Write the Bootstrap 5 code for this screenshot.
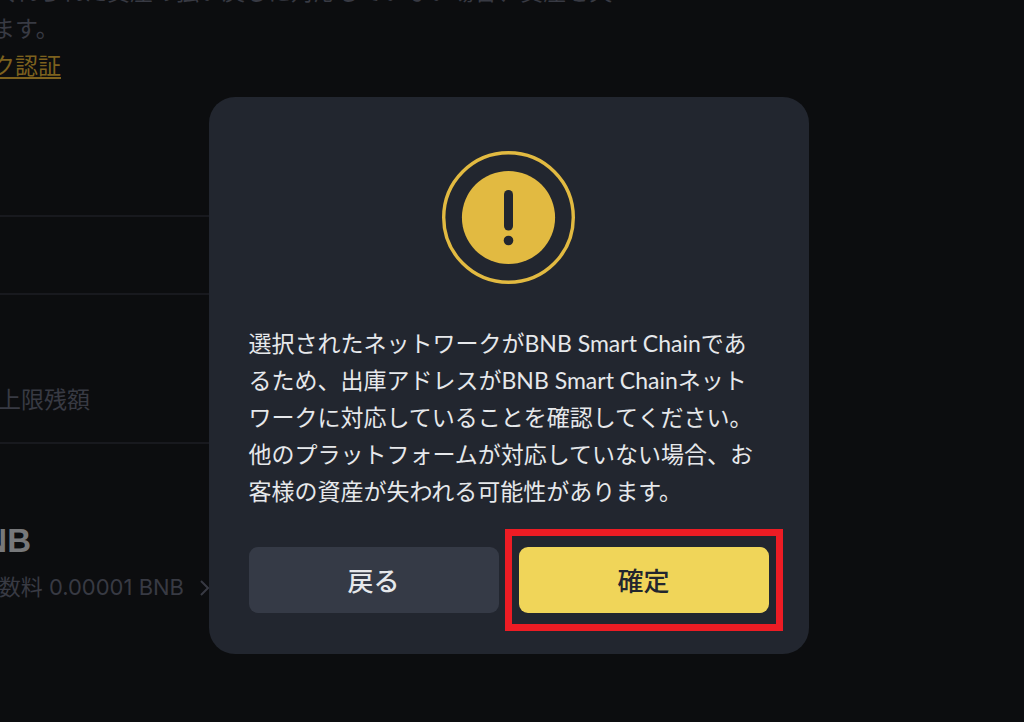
<!DOCTYPE html>
<html lang="ja">
<head>
<meta charset="utf-8">
<meta name="viewport" content="width=device-width, initial-scale=1">
<title>出庫ネットワークの確認</title>
<link href="https://cdn.jsdelivr.net/npm/bootstrap@5.3.0/dist/css/bootstrap.min.css" rel="stylesheet">
<style>
  body { background: #0c0d0f; color: #383a43; font: 23px/37px Lato, "Noto Sans CJK JP", sans-serif; }
  .backdrop-page { min-height: 100vh; }
  .notice { margin: -27px 0 131px -8px; }
  .notice a { color: #7d611e; text-decoration-thickness: 2px; text-underline-offset: 3px; }
  .rule { width: 210px; border-top: 2px solid #18191e; }
  .rule-gap { height: 76px; }
  .label-col { width: 90px; margin: 86px 0 24px; }
  .coin-col { width: 31px; margin-top: 77px; font: bold 33px/40px "Liberation Sans", sans-serif; color: #77787a; }
  .fee-col { width: 210px; font-family: Inter, "Noto Sans CJK JP", sans-serif; font-size: 22px; }
  .overlay { padding: 97px 7px 24px 0; }
  .confirm-box { width: 600px; max-width: 100%; padding: 54px 40px 41px; border-radius: 26px; background: #22262f; color: #e6e8eb; }
  .message { margin: 41px 0 37px; }
  .actions { gap: 20px; }
  .action { height: 66px; padding-top: 8px; border: 0; border-radius: 9px; font-size: 26px; font-weight: 500; }
  .action-back, .action-back:hover { background: #353a46; color: #e6e8eb; }
  .action-ok, .action-ok:hover { background: #f0d559; color: #22262f; }
  .highlight { inset: -18px -14px; border: 7px solid #ed1c24; }
</style>
</head>
<body>
<main class="backdrop-page overflow-hidden text-nowrap">
  <div class="notice">
    <p class="mb-0">入れられた資産の払い戻しに対応していない場合、資産を失</p>
    <p class="mb-0">ます。</p>
    <a href="#">ク認証</a>
  </div>
  <div class="rule"></div>
  <div class="rule-gap"></div>
  <div class="rule"></div>
  <div class="label-col d-flex justify-content-end">上限残額</div>
  <div class="rule"></div>
  <div class="coin-col d-flex justify-content-end">BNB</div>
  <div class="fee-col d-flex justify-content-end align-items-center mt-2">
    <span>手数料 0.00001 BNB</span>
    <svg class="ms-3 flex-shrink-0" width="10" height="16" viewBox="0 0 10 16" fill="none" stroke="currentColor" stroke-width="2" aria-hidden="true"><path d="M1 1l7 7-7 7"/></svg>
  </div>
</main>

<div class="overlay position-absolute top-0 start-0 w-100 d-flex justify-content-center">
  <section class="confirm-box" role="dialog" aria-modal="true" aria-labelledby="message">
    <svg class="d-block mx-auto" width="133" height="133" viewBox="0 0 133 133" aria-hidden="true">
      <circle cx="66.5" cy="66.5" r="64.8" fill="none" stroke="#e2ba41" stroke-width="3.4"/>
      <circle cx="66.5" cy="66.5" r="46.6" fill="#e2ba41"/>
      <rect x="62" y="39" width="9" height="40.5" rx="4.5" fill="#22262f"/>
      <circle cx="66.5" cy="89.5" r="4.8" fill="#22262f"/>
    </svg>
    <p class="message text-nowrap" id="message">選択されたネットワークがBNB Smart Chainであ<br>るため、出庫アドレスがBNB Smart Chainネット<br>ワークに対応していることを確認してください。<br>他のプラットフォームが対応していない場合、お<br>客様の資産が失われる可能性があります。</p>
    <div class="actions d-flex">
      <div class="flex-fill w-50"><button type="button" class="btn action action-back w-100">戻る</button></div>
      <div class="flex-fill w-50 position-relative">
        <button type="button" class="btn action action-ok w-100">確定</button>
        <div class="highlight position-absolute pe-none"></div>
      </div>
    </div>
  </section>
</div>
<script src="https://cdn.jsdelivr.net/npm/bootstrap@5.3.0/dist/js/bootstrap.bundle.min.js"></script>
</body>
</html>
